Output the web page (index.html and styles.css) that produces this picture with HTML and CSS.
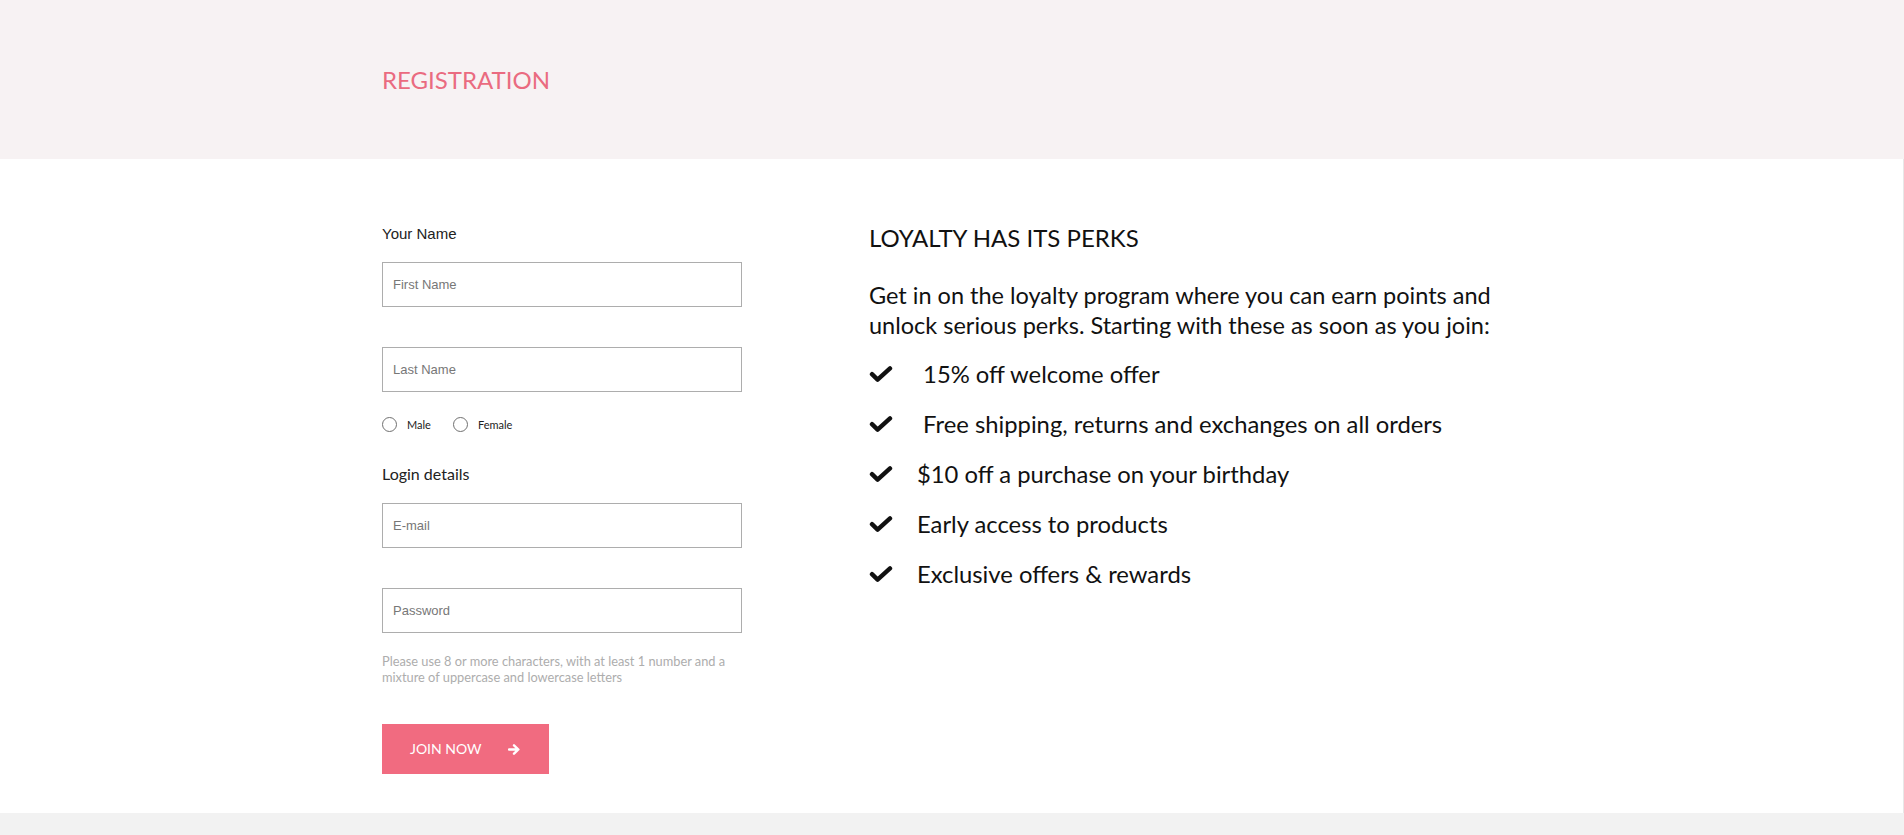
FILE: index.html
```html
<!DOCTYPE html>
<html lang="en">
<head>
<meta charset="utf-8">
<title>Registration</title>
<link rel="stylesheet" href="styles.css">
</head>
<body>
<header class="page-header">
  <div class="container">
    <h1 class="page-title">REGISTRATION</h1>
  </div>
</header>
<main class="register">
  <div class="container register-row">
    <form class="col-form" onsubmit="return false">
      <div class="field-label name-label">Your Name</div>
      <input class="text-input" type="text" placeholder="First Name">
      <input class="text-input gap-input" type="text" placeholder="Last Name">
      <div class="gender-row">
        <label class="radio-opt"><span class="radio-dot"></span><span class="radio-text">Male</span></label>
        <label class="radio-opt"><span class="radio-dot"></span><span class="radio-text">Female</span></label>
      </div>
      <div class="field-label login-label">Login details</div>
      <input class="text-input" type="email" placeholder="E-mail">
      <input class="text-input gap-input" type="password" placeholder="Password">
      <p class="hint">Please use 8 or more characters, with at least 1 number and a mixture of uppercase and lowercase letters</p>
      <button class="join-btn" type="submit">
        <span class="join-text">JOIN NOW</span>
        <svg class="join-arrow" width="12" height="11" viewBox="0 0 12 11" aria-hidden="true">
          <path d="M1 5.5H10.2M6 1.3L10.4 5.5L6 9.7" fill="none" stroke="#fff" stroke-width="2.4" stroke-linecap="round" stroke-linejoin="round"/>
        </svg>
      </button>
    </form>
    <section class="col-perks">
      <h2 class="perks-title">LOYALTY HAS ITS PERKS</h2>
      <p class="perks-intro">Get in on the loyalty program where you can earn points and unlock serious perks. Starting with these as soon as you join:</p>
      <ul class="perks-list">
        <li class="perk"><svg class="check" width="24" height="16" viewBox="0 0 24 16" aria-hidden="true"><path d="M3 8.2L8.6 13.6L21 2.4" fill="none" stroke="#111" stroke-width="4.4" stroke-linecap="round" stroke-linejoin="round"/></svg><span class="perk-text">&nbsp;15% off welcome offer</span></li>
        <li class="perk"><svg class="check" width="24" height="16" viewBox="0 0 24 16" aria-hidden="true"><path d="M3 8.2L8.6 13.6L21 2.4" fill="none" stroke="#111" stroke-width="4.4" stroke-linecap="round" stroke-linejoin="round"/></svg><span class="perk-text">&nbsp;Free shipping, returns and exchanges on all orders</span></li>
        <li class="perk"><svg class="check" width="24" height="16" viewBox="0 0 24 16" aria-hidden="true"><path d="M3 8.2L8.6 13.6L21 2.4" fill="none" stroke="#111" stroke-width="4.4" stroke-linecap="round" stroke-linejoin="round"/></svg><span class="perk-text">$10 off a purchase on your birthday</span></li>
        <li class="perk"><svg class="check" width="24" height="16" viewBox="0 0 24 16" aria-hidden="true"><path d="M3 8.2L8.6 13.6L21 2.4" fill="none" stroke="#111" stroke-width="4.4" stroke-linecap="round" stroke-linejoin="round"/></svg><span class="perk-text">Early access to products</span></li>
        <li class="perk"><svg class="check" width="24" height="16" viewBox="0 0 24 16" aria-hidden="true"><path d="M3 8.2L8.6 13.6L21 2.4" fill="none" stroke="#111" stroke-width="4.4" stroke-linecap="round" stroke-linejoin="round"/></svg><span class="perk-text">Exclusive offers &amp; rewards</span></li>
      </ul>
    </section>
  </div>
</main>
<footer class="page-footer"></footer>
</body>
</html>
```

FILE: styles.css
```css
html, body {
  margin: 0;
  padding: 0;
}

body {
  font-family: Lato, "Open Sans", sans-serif;
  color: #111;
  background: #fff;
  overflow: hidden;
}

.container {
  width: 1140px;
  margin: 0 auto;
}

.page-header {
  background: #f7f2f3;
  height: 159px;
  box-sizing: border-box;
  padding-top: 65px;
}

.page-title {
  margin: 0;
  font-size: 24px;
  line-height: 29px;
  font-weight: 400;
  color: #ea6b80;
}

.register {
  padding: 66px 0 39px;
  box-shadow: inset -1px 0 0 #e8e8e8;
}

.register-row {
  display: flex;
}

.col-form {
  width: 487px;
  display: flex;
  flex-direction: column;
  align-items: flex-start;
}

.field-label {
  color: #222;
}

.name-label {
  font-family: "Liberation Sans", Arial, sans-serif;
  font-size: 15px;
  line-height: 18px;
}

.login-label {
  font-size: 16px;
  line-height: 20px;
  margin-top: 32px;
}

.text-input {
  display: block;
  box-sizing: border-box;
  width: 360px;
  height: 45px;
  margin: 19px 0 0;
  padding: 0 10px;
  border: 1px solid #adadad;
  border-radius: 0;
  background: #fff;
  font-family: "Liberation Sans", Arial, sans-serif;
  font-size: 13px;
  color: #333;
  outline: none;
}

.text-input.gap-input {
  margin-top: 40px;
}

.text-input::placeholder {
  color: #777;
  opacity: 1;
}

.gender-row {
  display: flex;
  align-items: center;
  gap: 22px;
  margin-top: 25px;
  height: 15px;
}

.radio-opt {
  display: flex;
  align-items: center;
  gap: 10px;
  cursor: pointer;
}

.radio-dot {
  width: 15px;
  height: 15px;
  box-sizing: border-box;
  border: 1px solid #707070;
  border-radius: 50%;
  background: #fff;
}

.radio-text {
  font-size: 11px;
  line-height: 15px;
  color: #222;
}

.hint {
  margin: 20px 0 0;
  width: 360px;
  font-size: 12.8px;
  line-height: 16px;
  color: #adadad;
}

.join-btn {
  margin-top: 39px;
  width: 167px;
  height: 50px;
  border: none;
  border-radius: 0;
  background: #f16b80;
  color: #fff;
  display: flex;
  align-items: center;
  padding: 0 0 0 28px;
  gap: 26px;
  font-family: Lato, sans-serif;
  font-size: 14px;
  cursor: pointer;
}

.join-text {
  line-height: 16px;
}

.join-arrow {
  display: block;
}

.col-perks {
  flex: 1;
}

.perks-title {
  margin: -1px 0 0;
  font-size: 24px;
  line-height: 28px;
  font-weight: 400;
  color: #111;
}

.perks-intro {
  margin: 28px 0 0;
  font-size: 23.5px;
  line-height: 30px;
  color: #111;
}

.perks-list {
  list-style: none;
  margin: 19px 0 0;
  padding: 0;
}

.perk {
  display: flex;
  align-items: center;
  gap: 24px;
  font-size: 23.8px;
  line-height: 30px;
  margin-bottom: 20px;
}

.check {
  display: block;
  flex: none;
}

.page-footer {
  background: #f2f2f2;
  height: 60px;
}
```
